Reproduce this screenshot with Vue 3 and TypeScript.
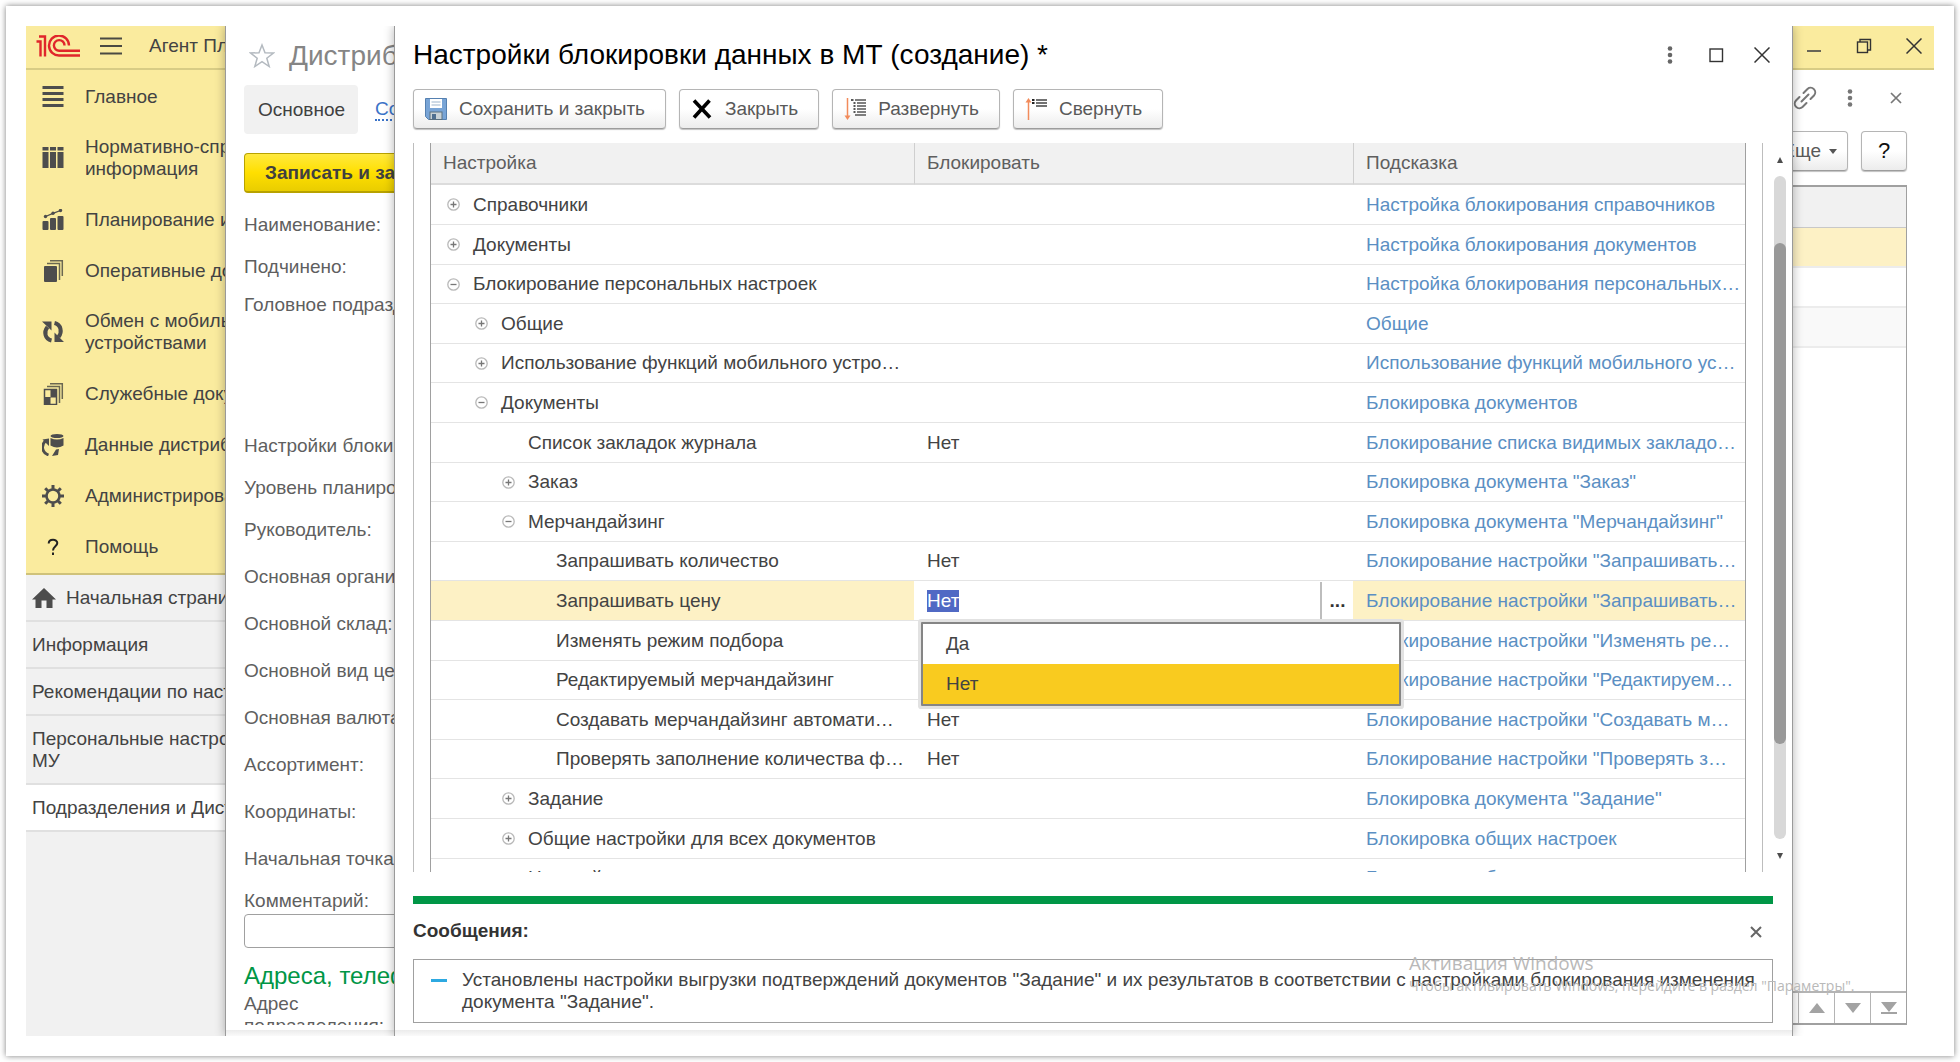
<script setup lang="ts">
import { onMounted, ref } from 'vue'

interface MenuItem {
  icon: string
  lines: string[]
}

interface TreeRow {
  level: number
  state: 'open' | 'closed' | 'leaf'
  name: string
  value: string
  hint: string
  editing?: boolean
}

interface Caption {
  text: string
  step: 'xs' | 's' | 'm' | 'xl'
}

const menu: MenuItem[] = [
  { icon: 'list', lines: ['Главное'] },
  { icon: 'binders', lines: ['Нормативно-спра', 'информация'] },
  { icon: 'chart', lines: ['Планирование и'] },
  { icon: 'docs', lines: ['Оперативные до'] },
  { icon: 'sync', lines: ['Обмен с мобиль', 'устройствами'] },
  { icon: 'service', lines: ['Служебные доку'] },
  { icon: 'data', lines: ['Данные дистриб'] },
  { icon: 'gear', lines: ['Администрирова'] },
  { icon: 'help', lines: ['Помощь'] },
]

const pages: { lines: string[]; home?: boolean; current?: boolean }[] = [
  { lines: ['Начальная страни'], home: true },
  { lines: ['Информация'] },
  { lines: ['Рекомендации по наст'] },
  { lines: ['Персональные настро', 'МУ'] },
  { lines: ['Подразделения и Дист'], current: true },
]

const captions: Caption[] = [
  { text: 'Наименование:', step: 's' },
  { text: 'Подчинено:', step: 'xs' },
  { text: 'Головное подразд', step: 'xl' },
  { text: 'Настройки блокир', step: 's' },
  { text: 'Уровень планиро', step: 's' },
  { text: 'Руководитель:', step: 'm' },
  { text: 'Основная органи', step: 'm' },
  { text: 'Основной склад:', step: 'm' },
  { text: 'Основной вид цен', step: 'm' },
  { text: 'Основная валюта', step: 'm' },
  { text: 'Ассортимент:', step: 'm' },
  { text: 'Координаты:', step: 'm' },
  { text: 'Начальная точка', step: 's' },
]

const rows: TreeRow[] = [
  { level: 0, state: 'closed', name: 'Справочники', value: '', hint: 'Настройка блокирования справочников' },
  { level: 0, state: 'closed', name: 'Документы', value: '', hint: 'Настройка блокирования документов' },
  { level: 0, state: 'open', name: 'Блокирование персональных настроек', value: '', hint: 'Настройка блокирования персональных…' },
  { level: 1, state: 'closed', name: 'Общие', value: '', hint: 'Общие' },
  { level: 1, state: 'closed', name: 'Использование функций мобильного устро…', value: '', hint: 'Использование функций мобильного ус…' },
  { level: 1, state: 'open', name: 'Документы', value: '', hint: 'Блокировка документов' },
  { level: 2, state: 'leaf', name: 'Список закладок журнала', value: 'Нет', hint: 'Блокирование списка видимых закладо…' },
  { level: 2, state: 'closed', name: 'Заказ', value: '', hint: 'Блокировка документа "Заказ"' },
  { level: 2, state: 'open', name: 'Мерчандайзинг', value: '', hint: 'Блокировка документа "Мерчандайзинг"' },
  { level: 3, state: 'leaf', name: 'Запрашивать количество', value: 'Нет', hint: 'Блокирование настройки "Запрашивать…' },
  { level: 3, state: 'leaf', name: 'Запрашивать цену', value: 'Нет', hint: 'Блокирование настройки "Запрашивать…', editing: true },
  { level: 3, state: 'leaf', name: 'Изменять режим подбора', value: '', hint: 'Блокирование настройки "Изменять ре…' },
  { level: 3, state: 'leaf', name: 'Редактируемый мерчандайзинг', value: '', hint: 'Блокирование настройки "Редактируем…' },
  { level: 3, state: 'leaf', name: 'Создавать мерчандайзинг автомати…', value: 'Нет', hint: 'Блокирование настройки "Создавать м…' },
  { level: 3, state: 'leaf', name: 'Проверять заполнение количества ф…', value: 'Нет', hint: 'Блокирование настройки "Проверять з…' },
  { level: 2, state: 'closed', name: 'Задание', value: '', hint: 'Блокировка документа "Задание"' },
  { level: 2, state: 'closed', name: 'Общие настройки для всех документов', value: '', hint: 'Блокировка общих настроек' },
  { level: 2, state: 'closed', name: 'Настройки', value: '', hint: 'Блокировка общих' },
]

const options = ['Да', 'Нет']
const choice = ref('Нет')
const comment = ref('')
const editor = ref<HTMLInputElement[]>([])

onMounted(() => {
  const field = editor.value[0]
  if (field) {
    field.focus({ preventScroll: true })
    field.select()
  }
})
</script>

<template>
  <div class="frame">
    <div class="stage">
      <aside class="side">
        <header class="side-head">
          <svg class="logo" width="44" height="22" viewBox="0 0 44 22" fill="none" stroke="#e0262b" stroke-width="2.400">
            <path d="M0.500 6.500H4.500V21.500M3 1.500H9V21.500" />
            <path d="M33 10.500A10 10 0 1 0 23.500 20.500H44" />
            <path d="M28.500 10.500A5.300 5.300 0 1 0 23.500 15.700H44" />
          </svg>
          <button class="bare burger" type="button" aria-label="Меню">
            <svg width="22" height="18" viewBox="0 0 22 18" stroke="#4a4a42" stroke-width="2"><path d="M0 1.500H22M0 9H22M0 16.500H22" /></svg>
          </button>
          <span class="product">Агент Пл</span>
        </header>
        <nav class="menu">
          <a v-for="item in menu" :key="item.icon" href="#" :class="{ double: item.lines.length > 1 }">
            <svg class="menu-icon" width="22" height="22" viewBox="0 0 22 22" fill="#4d4d4d">
              <path v-if="item.icon === 'list'" d="M0.500 0h21v3h-21zM0.500 6h21v3h-21zM0.500 12h21v3h-21zM0.500 18h21v3h-21z" />
              <path v-else-if="item.icon === 'binders'" d="M0.500 0h6v3.500h-6zM8 0h6v3.500h-6zM15.500 0h6v3.500h-6zM0.500 5h6v16h-6zM8 5h6v16h-6zM15.500 5h6v16h-6z" />
              <g v-else-if="item.icon === 'chart'">
                <path d="M1.500 12h4q1 0 1 1v7q0 1-1 1h-4q-1 0-1-1v-7q0-1 1-1zM9 9h4q1 0 1 1v10q0 1-1 1H9q-1 0-1-1V10q0-1 1-1zM16.500 7h4q1 0 1 1v12q0 1-1 1h-4q-1 0-1-1V8q0-1 1-1z" />
                <path d="M3.500 7.500L11 4.300L18.500 1.500" fill="none" stroke="#4d4d4d" stroke-width="1.300" />
                <circle cx="3.500" cy="7.500" r="1.700" /><circle cx="11" cy="4.300" r="1.700" /><circle cx="18.500" cy="1.500" r="1.700" />
              </g>
              <g v-else-if="item.icon === 'docs'">
                <rect x="2" y="6" width="13" height="16" rx="1" />
                <path d="M5 3.500h12.500V20M8 0.700h12.300V16" fill="none" stroke="#6a6751" stroke-width="1.500" />
              </g>
              <g v-else-if="item.icon === 'sync'" fill="none" stroke="#4d4d4d" stroke-width="4">
                <path d="M9.500 19.500C3 18 1.500 11 5.500 6" /><path d="M12.500 2C19 3.500 20.500 11 16.500 16" />
                <path d="M0 0.500h9.500v9zM22 21h-9.500v-9.500z" fill="#4d4d4d" stroke="none" />
              </g>
              <g v-else-if="item.icon === 'service'">
                <rect x="2.500" y="6.500" width="12" height="15" fill="none" stroke="#4d4d4d" stroke-width="1.500" />
                <path d="M8.500 7h5.500v7.500h-5.500zM3 14h5.500v7h-5.500z" />
                <path d="M5 3.500h12.500V20M8 0.700h12.300V16" fill="none" stroke="#6a6751" stroke-width="1.500" />
              </g>
              <g v-else-if="item.icon === 'data'">
                <ellipse cx="15" cy="2" rx="6.500" ry="2" />
                <path d="M8.500 4q6.500 3 13 0v7.500q-6.500 4-13 0z" />
                <path d="M6.500 21C-0.500 18.500 -1 11 3.500 7" fill="none" stroke="#4d4d4d" stroke-width="2.800" />
                <path d="M0.500 5.500L7 4.500V12zM10 22l4-6.500 3-0.500-1 6z" />
              </g>
              <g v-else-if="item.icon === 'gear'" fill="none" stroke="#4d4d4d">
                <circle cx="11" cy="11" r="6.500" stroke-width="2.600" />
                <path d="M11 0V4M11 18V22M0 11H4M18 11H22M3.200 3.200L6 6M16 16L18.800 18.800M18.800 3.200L16 6M6 16L3.200 18.800" stroke-width="3" />
              </g>
              <g v-else fill="none" stroke="#222" stroke-width="2">
                <path d="M6.700 7.500C6.700 2.500 15.300 2.700 15.300 7C15.300 10 11 10.500 11 14.500M11 16.500V19" />
              </g>
            </svg>
            <span class="lines"><span v-for="line in item.lines" :key="line">{{ line }}</span></span>
          </a>
        </nav>
        <nav class="pages">
          <a v-for="page in pages" :key="page.lines[0]" href="#" :class="{ current: page.current }">
            <svg v-if="page.home" width="24" height="20" viewBox="0 0 24 20" fill="#4d4d4d"><path d="M12 0L24 11.500H20.500V20H14.500V12.500H9.500V20H3.500V11.500H0z" /></svg>
            <span class="lines"><span v-for="line in page.lines" :key="line">{{ line }}</span></span>
          </a>
        </nav>
      </aside>

      <section class="card">
        <div class="card-body">
          <header class="card-head">
            <svg width="26" height="25" viewBox="0 0 26 25" fill="none" stroke="#b4bac0" stroke-width="1.500"><path d="M13 2L16 9.700L24.500 10L17.800 15.200L20.200 23.500L13 18.700L5.800 23.500L8.200 15.200L1.500 10L10 9.700Z" /></svg>
            <h2>Дистриб</h2>
          </header>
          <div class="tabs">
            <a class="tab" href="#">Основное</a>
            <a class="more-tab" href="#">Со</a>
          </div>
          <button class="primary" type="button">Записать и зак</button>
          <div class="captions">
            <div v-for="c in captions" :key="c.text" :class="'step-' + c.step">{{ c.text }}</div>
          </div>
          <label for="comment">Комментарий:</label>
          <input id="comment" v-model="comment" class="field comment" type="text" />
          <h3>Адреса, телеф</h3>
          <div class="address">
            <label for="address">Адрес<br />подразделения:</label>
            <input id="address" class="field" type="text" />
          </div>
        </div>
        <div class="under"></div>
      </section>

      <section class="dialog" role="dialog" aria-labelledby="dialog-title">
        <header class="dialog-head">
          <h1 id="dialog-title">Настройки блокировки данных в МТ (создание) *</h1>
          <div class="controls">
            <button class="bare" type="button" aria-label="Ещё"><svg width="16" height="18" viewBox="0 0 16 18" fill="#666"><circle cx="8" cy="2.500" r="2.300" /><circle cx="8" cy="9" r="2.300" /><circle cx="8" cy="15.500" r="2.300" /></svg></button>
            <button class="bare" type="button" aria-label="Развернуть окно"><svg width="16" height="16" viewBox="0 0 16 16" fill="none" stroke="#333" stroke-width="1.400"><rect x="2" y="2" width="12.500" height="12.500" /></svg></button>
            <button class="bare" type="button" aria-label="Закрыть окно"><svg width="16" height="16" viewBox="0 0 16 16" stroke="#333" stroke-width="1.500"><path d="M0.500 0.500L15.500 15.500M15.500 0.500L0.500 15.500" /></svg></button>
          </div>
        </header>
        <div class="toolbar">
          <button class="btn" type="button">
            <svg width="22" height="22" viewBox="0 0 22 22">
              <path d="M0.500 0.500h21v21h-18l-3-3z" fill="#78a4d6" stroke="#5580b0" />
              <rect x="5" y="1" width="12" height="9" fill="#fff" /><path d="M6.500 4h9M6.500 7h9" stroke="#9db4cc" />
              <rect x="5" y="14" width="12" height="7.500" fill="#c9d2d6" stroke="#5a7080" /><rect x="7" y="16" width="4" height="5" fill="#4f6f90" />
            </svg>
            Сохранить и закрыть
          </button>
          <button class="btn" type="button">
            <svg width="22" height="20" viewBox="0 0 22 20" stroke="#000" stroke-width="3.600"><path d="M3 1.500L19 18.500M18.500 1.500L3 18.500" /></svg>
            Закрыть
          </button>
          <button class="btn" type="button">
            <svg width="22" height="22" viewBox="0 0 22 22">
              <path d="M3.500 0V19" stroke="#f28b5b" stroke-width="1.500" /><path d="M0.500 17.500h6L3.500 22z" fill="#f28b5b" />
              <path d="M11 2H22M13 5H22M13 8H22M13 11H22M13 14H22M11 17H22" stroke="#555" stroke-width="1.500" /><path d="M7 2h2.500M9.500 5h2M9.500 8h2M9.500 11h2M9.500 14h2" stroke="#222" stroke-width="1.500" />
            </svg>
            Развернуть
          </button>
          <button class="btn" type="button">
            <svg width="22" height="22" viewBox="0 0 22 22">
              <path d="M3.500 3V22" stroke="#f28b5b" stroke-width="1.500" /><path d="M0.500 4.500h6L3.500 0z" fill="#f28b5b" />
              <path d="M11 2H22M11 5H22M11 8H22" stroke="#444" stroke-width="1.600" /><path d="M7 2h2.500M7 5h2.500" stroke="#222" stroke-width="1.800" />
            </svg>
            Свернуть
          </button>
        </div>

        <div class="viewport">
          <div class="sheet">
            <table>
              <colgroup><col class="col-name" /><col class="col-value" /><col /></colgroup>
              <thead>
                <tr><th>Настройка</th><th>Блокировать</th><th>Подсказка</th></tr>
              </thead>
              <tbody>
                <tr v-for="(row, i) in rows" :key="i" :class="{ active: row.editing }">
                  <td>
                    <div class="name" :class="['level-' + row.level, { leaf: row.state === 'leaf' }]">
                      <svg v-if="row.state !== 'leaf'" width="13" height="13" viewBox="0 0 13 13" fill="none">
                        <circle cx="6.500" cy="6.500" r="5.700" stroke="#b9b9b9" stroke-width="1.300" />
                        <path :d="row.state === 'open' ? 'M3.500 6.500H9.500' : 'M3.500 6.500H9.500M6.500 3.500V9.500'" stroke="#777" stroke-width="1.300" />
                      </svg>
                      <span>{{ row.name }}</span>
                    </div>
                  </td>
                  <td v-if="row.editing" class="edit-cell">
                    <div class="editor">
                      <input ref="editor" v-model="choice" type="text" aria-label="Блокировать" />
                      <button class="bare" type="button">...</button>
                    </div>
                    <ul class="dropdown" role="listbox">
                      <li v-for="o in options" :key="o" role="option" :aria-selected="o === choice" :class="{ chosen: o === choice }" @click="choice = o">{{ o }}</li>
                    </ul>
                  </td>
                  <td v-else>{{ row.value }}</td>
                  <td><a href="#">{{ row.hint }}</a></td>
                </tr>
              </tbody>
            </table>
          </div>
          <div class="scroll">
            <span class="arrow up"></span>
            <div class="track"><div class="thumb"></div></div>
            <span class="arrow down"></span>
          </div>
        </div>

        <div class="messages">
          <header>
            <h4>Сообщения:</h4>
            <button class="bare" type="button" aria-label="Скрыть сообщения"><svg width="12" height="12" viewBox="0 0 12 12" stroke="#666" stroke-width="2"><path d="M1 1L11 11M11 1L1 11" /></svg></button>
          </header>
          <div class="message">
            <span class="dash"></span>
            <p>Установлены настройки выгрузки подтверждений документов "Задание" и их результатов в соответствии с настройками блокирования изменения документа "Задание".</p>
          </div>
        </div>
        <div class="under"></div>
      </section>

      <section class="back">
        <header class="back-head">
          <button class="bare" type="button" aria-label="Свернуть"><svg width="16" height="16" viewBox="0 0 16 16" stroke="#444" stroke-width="1.600"><path d="M1 13H15" /></svg></button>
          <button class="bare" type="button" aria-label="Восстановить"><svg width="16" height="16" viewBox="0 0 16 16" fill="none" stroke="#333" stroke-width="1.400"><rect x="1.500" y="4" width="10" height="10.500" /><path d="M4 4V1.500H14.500V12H11.500" /></svg></button>
          <button class="bare" type="button" aria-label="Закрыть"><svg width="16" height="16" viewBox="0 0 16 16" stroke="#333" stroke-width="1.500"><path d="M0.500 0.500L15.500 15.500M15.500 0.500L0.500 15.500" /></svg></button>
        </header>
        <div class="back-tools">
          <svg width="24" height="24" viewBox="0 0 24 24" fill="none" stroke="#777" stroke-width="2" stroke-linecap="round"><path d="M8.500 15.500L15.500 8.500M10.500 7L14.500 3A4.600 4.600 0 0 1 21 9.500L17.500 13M6.500 11L3 14.500A4.600 4.600 0 0 0 9.500 21L13.500 17" /></svg>
          <svg width="16" height="18" viewBox="0 0 16 18" fill="#777"><circle cx="8" cy="2.500" r="2.300" /><circle cx="8" cy="9" r="2.300" /><circle cx="8" cy="15.500" r="2.300" /></svg>
          <svg width="12" height="12" viewBox="0 0 12 12" stroke="#777" stroke-width="1.700"><path d="M1 1L11 11M11 1L1 11" /></svg>
        </div>
        <div class="back-buttons">
          <button class="btn" type="button">Еще <span class="caret"></span></button>
          <button class="btn question" type="button">?</button>
        </div>
        <div class="list">
          <div class="list-head"></div>
          <div class="list-row picked"></div>
          <div class="list-row"></div>
          <div class="list-row shaded"></div>
          <div class="list-rest"></div>
          <div class="pager">
            <button class="bare" type="button" aria-label="В начало"></button>
            <button class="bare" type="button" aria-label="Вверх"><svg width="16" height="10" viewBox="0 0 16 10" fill="#a3a3a3"><path d="M8 0L16 10H0z" /></svg></button>
            <button class="bare" type="button" aria-label="Вниз"><svg width="16" height="10" viewBox="0 0 16 10" fill="#a3a3a3"><path d="M8 10L16 0H0z" /></svg></button>
            <button class="bare" type="button" aria-label="В конец"><svg width="16" height="12" viewBox="0 0 16 12" fill="#a3a3a3"><path d="M8 10L16 0H0zM0 10h16v2H0z" /></svg></button>
          </div>
        </div>
      </section>

      <div class="activation">
        <div class="activation-title">Активация Windows</div>
        <div>Чтобы активировать Windows, перейдите в раздел "Параметры".</div>
      </div>
    </div>
  </div>
</template>

<style>
html,
body,
#app {
  height: 100%;
}
body {
  margin: 0;
  background: #fff;
}
</style>

<style scoped>
* {
  box-sizing: border-box;
}
.frame {
  display: flex;
  height: 100%;
  padding: 26px;
  font: 19px/22px 'Liberation Sans', Arial, sans-serif;
  color: #434343;
}
.frame::before {
  content: '';
  position: absolute;
  inset: 6px;
  box-shadow: 0 0 6px rgba(0, 0, 0, 0.5);
  pointer-events: none;
}
.stage {
  position: relative;
  display: flex;
  flex: 1;
  min-width: 0;
  overflow: hidden;
  white-space: nowrap;
}
a {
  color: inherit;
  text-decoration: none;
}
h1,
h2,
h3,
h4,
p,
ul {
  margin: 0;
  padding: 0;
  font-weight: normal;
}
button,
input {
  font: inherit;
  color: inherit;
}
svg {
  display: block;
  flex: none;
}
.bare {
  display: flex;
  align-items: center;
  justify-content: center;
  padding: 0;
  border: 0;
  background: none;
}
.lines {
  display: flex;
  flex-direction: column;
}

/* Section panel */
.side {
  flex: none;
  width: 199px;
  display: flex;
  flex-direction: column;
  overflow: hidden;
  background: #f1f1f1;
}
.side-head {
  display: flex;
  align-items: center;
  height: 44px;
  padding: 0 0 2px 10px;
  background: #faeb9e;
  border-bottom: 2px solid #d8cc85;
}
.burger {
  margin-left: 20px;
}
.product {
  margin-left: 27px;
}
.menu {
  padding: 1px 0;
  background: #faeb9e;
  border-bottom: 2px solid #cfc27a;
}
.menu a {
  display: flex;
  align-items: center;
  gap: 21px;
  height: 51px;
  padding-left: 16px;
}
.menu a.double {
  height: 72px;
}
.pages a {
  display: flex;
  align-items: center;
  gap: 10px;
  min-height: 47px;
  padding: 12px 0 11px 6px;
  border-bottom: 2px solid #e0e0e0;
}
.pages a.current {
  background: #fff;
}

/* Card behind the dialog */
.card {
  position: relative;
  z-index: 1;
  flex: none;
  width: 169px;
  display: flex;
  flex-direction: column;
  background: #fff;
  border-left: 1px solid #9a9a9a;
  box-shadow: 0 0 10px rgba(0, 0, 0, 0.3);
}
.card-body {
  flex: 1;
  min-height: 0;
  padding-left: 18px;
  margin-bottom: 5px;
  overflow: hidden;
  color: #5f5f5f;
}
.card-head {
  display: flex;
  align-items: center;
  gap: 14px;
  height: 59px;
  padding-left: 5px;
}
.card-head h2 {
  font-size: 28px;
  line-height: 32px;
  color: #858585;
}
.tabs {
  display: flex;
  align-items: center;
  gap: 17px;
  height: 49px;
}
.tab {
  padding: 14px 13px 13px 14px;
  border-radius: 4px;
  background: #f1f1f1;
  color: #404040;
}
.more-tab {
  line-height: 20px;
  color: #3b73c8;
  border-bottom: 2px dotted #3b73c8;
}
.primary {
  display: block;
  height: 40px;
  margin-top: 19px;
  padding: 0 20px;
  border: 1px solid #b8a200;
  border-bottom-width: 2px;
  border-radius: 4px;
  background: linear-gradient(#ffe93f, #ffdf00 50%, #e9cd00);
  font-weight: bold;
  color: #404040;
}
.captions {
  padding-top: 21px;
}
.step-xs {
  height: 38px;
}
.step-s {
  height: 42px;
}
.step-m {
  height: 47px;
}
.step-xl {
  height: 141px;
}
.card label {
  display: block;
}
.field {
  height: 34px;
  border: 1px solid #a0a0a0;
  border-radius: 4px;
  background: #fff;
}
.comment {
  display: block;
  width: 320px;
  margin-top: 2px;
}
.card h3 {
  margin-top: 13px;
  font-size: 24px;
  line-height: 30px;
  color: #009646;
}
.address {
  display: flex;
  gap: 10px;
  padding-top: 2px;
}
.under {
  flex: none;
  height: 6px;
  background: linear-gradient(#ebebeb, #fafafa);
}

/* Dialog */
.dialog {
  position: relative;
  z-index: 2;
  flex: 1;
  min-width: 0;
  display: flex;
  flex-direction: column;
  background: #fff;
  border: solid #9a9a9a;
  border-width: 0 1px;
  box-shadow: 0 0 10px rgba(0, 0, 0, 0.3);
}
.dialog-head {
  display: flex;
  align-items: center;
  justify-content: space-between;
  height: 58px;
  padding: 0 22px 0 18px;
}
.dialog-head h1 {
  font-size: 28px;
  line-height: 32px;
  color: #000;
}
.controls {
  display: flex;
  align-items: center;
  gap: 30px;
}
.toolbar {
  display: flex;
  gap: 13px;
  padding: 5px 18px 14px;
}
.btn {
  display: flex;
  align-items: center;
  gap: 12px;
  height: 40px;
  padding: 0 20px 0 11px;
  border: 1px solid #b5b5b5;
  border-bottom-color: #9c9c9c;
  border-radius: 4px;
  background: linear-gradient(#fff 50%, #ececec);
  box-shadow: 0 1px 1px rgba(0, 0, 0, 0.25);
  color: #595959;
}
.viewport {
  flex: 1;
  min-height: 0;
  display: flex;
  gap: 11px;
  padding: 0 6px 0 18px;
  overflow: hidden;
}
.sheet {
  flex: 1;
  min-width: 0;
  min-height: 0;
  padding: 0 16px;
  border: solid #bdbdbd;
  border-width: 0 1px;
}
table {
  width: 100%;
  table-layout: fixed;
  border-collapse: separate;
  border-spacing: 0;
  border: solid #a0a0a0;
  border-width: 0 1px;
}
.col-name {
  width: 483px;
}
.col-value {
  width: 439px;
}
th {
  height: 42px;
  padding: 0 0 1px 12px;
  text-align: left;
  font-weight: normal;
  color: #5f5f5f;
  background: #f1f1f1;
  border-bottom: 2px solid #dcdcdc;
}
th + th {
  border-left: 1px solid #cfcfcf;
}
td {
  height: 40px;
  padding: 0 0 0 13px;
  border-bottom: 1px solid #e4e4e4;
}
tr:nth-child(5n + 3) td,
tr:nth-child(5n) td {
  height: 39px;
}
td:first-child {
  padding: 0;
}
.name {
  display: flex;
  align-items: center;
  gap: 13px;
}
.level-0 {
  padding-left: 16px;
}
.level-1 {
  padding-left: 44px;
}
.level-2 {
  padding-left: 71px;
}
.level-2.leaf {
  padding-left: 97px;
}
.level-3 {
  padding-left: 125px;
}
td a {
  color: #5b8fc3;
}
.active td {
  background: #fdf1c5;
}
.active td.edit-cell {
  position: relative;
  padding: 0;
  background: #fff;
}
.editor {
  display: flex;
  align-items: stretch;
  height: 37px;
}
.editor input {
  flex: 1;
  min-width: 0;
  padding: 0 0 0 13px;
  border: 0;
  outline: 0;
  background: #fff;
}
.editor input::selection {
  background: #5069c4;
  color: #fff;
}
.editor button {
  width: 33px;
  border-left: 2px solid #bdbdbd;
  font-weight: bold;
  color: #333;
}
.dropdown {
  position: absolute;
  z-index: 3;
  top: 41px;
  left: 7px;
  right: -48px;
  border: 2px solid #858585;
  border-radius: 1px;
  background: #fff;
  box-shadow: 0 0 0 3px #e2e2e2;
  list-style: none;
}
.dropdown li {
  height: 40px;
  padding: 9px 0 9px 23px;
}
.dropdown li.chosen {
  background: #f9cb1f;
}
.scroll {
  flex: none;
  width: 12px;
  display: flex;
  flex-direction: column;
  align-items: center;
  padding: 14px 0 13px;
}
.arrow {
  border: solid transparent;
  border-width: 0 3px;
}
.arrow.up {
  border-bottom: 6px solid #4d4d4d;
}
.arrow.down {
  border-top: 6px solid #4d4d4d;
}
.track {
  flex: 1;
  width: 12px;
  margin: 13px 0 14px;
  padding-top: 67px;
  border-radius: 6px;
  background: #d8d8d8;
}
.thumb {
  height: 84%;
  border-radius: 6px;
  background: #999;
}
.messages {
  margin: 24px 19px 7px 18px;
  border-top: 8px solid #009646;
}
.messages header {
  display: flex;
  align-items: center;
  justify-content: space-between;
  height: 55px;
  padding-right: 11px;
}
.messages h4 {
  padding-bottom: 2px;
  font-weight: bold;
  color: #333;
}
.message {
  display: flex;
  gap: 15px;
  padding: 9px 10px 9px 17px;
  border: 1px solid #a0a0a0;
  white-space: normal;
}
.dash {
  flex: none;
  width: 16px;
  height: 3px;
  margin-top: 10px;
  background: #2da9e1;
}

/* Visible edge of the main window */
.back {
  flex: none;
  width: 141px;
  display: flex;
  flex-direction: column;
  overflow: hidden;
}
.back-head {
  display: flex;
  align-items: center;
  justify-content: flex-end;
  gap: 34px;
  height: 44px;
  padding: 0 12px 3px 0;
  background: #faeb9e;
  border-bottom: 2px solid #d8cc85;
}
.back-tools {
  display: flex;
  align-items: center;
  justify-content: flex-end;
  height: 56px;
  padding-right: 32px;
}
.back-tools svg + svg {
  margin-left: 25px;
}
.back-tools svg + svg + svg {
  margin-left: 32px;
}
.back-buttons {
  display: flex;
  justify-content: flex-end;
  gap: 13px;
  padding: 5px 27px 14px 0;
}
.back-buttons .btn {
  flex: none;
}
.back-buttons .question {
  width: 46px;
  justify-content: center;
  padding: 0;
  font-size: 22px;
  color: #111;
}
.back-buttons .btn:first-child {
  padding-right: 10px;
  gap: 8px;
}
.caret {
  border: solid transparent;
  border-width: 0 4px;
  border-top: 5px solid #555;
}
.list {
  flex: 1;
  display: flex;
  flex-direction: column;
  margin: 0 27px 11px 0;
  border: solid #a0a0a0;
  border-width: 2px 1px 2px 0;
}
.list-head {
  height: 41px;
  background: #f1f1f1;
  border-bottom: 1px solid #c8c8c8;
}
.list-row {
  height: 40px;
  border-bottom: 2px solid #ececec;
}
.list-row.picked {
  background: #fdf1c5;
}
.list-row.shaded {
  background: #f9f9f9;
}
.list-rest {
  flex: 1;
}
.pager {
  display: flex;
  height: 32px;
  border-top: 2px solid #b4b4b4;
}
.pager .bare {
  flex: none;
  width: 36px;
  border-left: 1px solid #b4b4b4;
}
.pager .bare:first-child {
  flex: 1;
  width: auto;
  border: 0;
}

.activation {
  position: absolute;
  z-index: 4;
  right: 70px;
  bottom: 39px;
  width: 455px;
  font: 14px/22px 'Open Sans', 'Noto Sans', sans-serif;
  color: #b9b9b9;
  pointer-events: none;
}
.activation-title {
  font-size: 19px;
  line-height: 24px;
}
</style>
